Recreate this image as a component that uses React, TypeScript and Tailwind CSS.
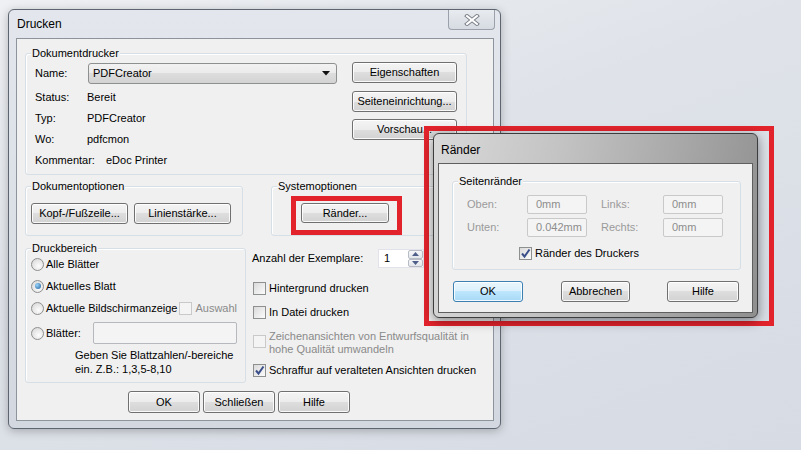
import React from "react";

type Kids = { children?: React.ReactNode; className?: string };

function Btn({ children, className = "", focus = false }: Kids & { focus?: boolean }) {
  return (
    <div
      className={`flex items-center justify-center rounded-[3px] border whitespace-nowrap shadow-[inset_0_0_0_1px_rgba(255,255,255,0.85)] ${
        focus
          ? "border-[#3c7fb1] bg-[linear-gradient(180deg,#eaf6fd,#d9f0fc_50%,#bee6fd_50%,#a7d9f5)]"
          : "border-[#707070] bg-[linear-gradient(180deg,#f4f4f4,#ececec_50%,#dedede_50%,#d2d2d2)]"
      } ${className}`}
    >
      {children}
    </div>
  );
}

function Tick() {
  return (
    <svg width="11" height="11" viewBox="0 0 11 11">
      <path d="M2 5.5 L4.5 8.5 L9.5 1.5" fill="none" stroke="#3a4f8a" strokeWidth="2" />
    </svg>
  );
}

function Check({ checked = false, disabled = false }: { checked?: boolean; disabled?: boolean }) {
  return (
    <div
      className={`flex h-[13px] w-[13px] shrink-0 items-center justify-center border ${
        disabled ? "border-[#c9c9c9] bg-[#f4f4f4]" : "border-[#8e8f8f] bg-[linear-gradient(135deg,#dadada,#fbfbfb)]"
      }`}
    >
      {checked && <Tick />}
    </div>
  );
}

function Radio({ on = false }: { on?: boolean }) {
  return (
    <div className="flex h-[13px] w-[13px] shrink-0 items-center justify-center rounded-full border border-[#8e8f8f] bg-[radial-gradient(circle_at_60%_65%,#fdfdfd,#d3d3d3)]">
      {on && <div className="h-[6px] w-[6px] rounded-full bg-[radial-gradient(circle_at_35%_35%,#9bd6fa,#1d5d9c)]" />}
    </div>
  );
}

function Group({ label, className = "", children }: Kids & { label: string }) {
  return (
    <div className={`relative rounded-[3px] border border-[#d5dfe5] shadow-[inset_1px_1px_0_#ffffff] ${className}`}>
      <span className="absolute -top-[8px] left-[5px] bg-[#f0f0f0] px-[1px] leading-[14px]">{label}</span>
      {children}
    </div>
  );
}

function Field({ label, value }: { label: string; value: string }) {
  return (
    <div className="flex h-[21px] items-center">
      <span className="w-[52px] shrink-0">{label}</span>
      <span>{value}</span>
    </div>
  );
}

function GrayInput({ value, className = "" }: { value: string; className?: string }) {
  return (
    <div className={`flex h-[19px] items-center rounded-[2px] border border-[#c9c9c9] bg-[#f4f4f4] pl-[8px] text-[#8d8d8d] ${className}`}>
      {value}
    </div>
  );
}

export default function App() {
  return (
    <div className="relative h-[450px] w-[801px] overflow-hidden bg-[linear-gradient(160deg,#eef0f3_0%,#dfe3e9_40%,#d6dbe4_100%)] font-['Liberation_Sans',Arial,sans-serif] text-[11px] text-black">
      {/* Drucken window */}
      <div className="absolute left-[8px] top-[9px] flex h-[420px] w-[493px] flex-col rounded-[6px] border border-[#5d6570] bg-[linear-gradient(180deg,#e3e7ed,#d3d8e0)] shadow-[0_2px_10px_rgba(0,0,0,0.25)]">
        <div className="flex h-[28px] items-center pl-[8px] text-[12px]">Drucken</div>
        <div className="absolute right-[5px] top-0 flex h-[20px] w-[47px] items-center justify-center rounded-b-[4px] border border-t-0 border-[#9aa1aa] bg-[linear-gradient(180deg,#e8ebef,#d6dbe2)]">
          <svg width="16" height="12" viewBox="0 0 16 12">
            <path d="M3 2 L13 10 M13 2 L3 10" stroke="#7b8088" strokeWidth="4" strokeLinecap="square" />
            <path d="M3 2 L13 10 M13 2 L3 10" stroke="#ffffff" strokeWidth="2" strokeLinecap="square" />
          </svg>
        </div>

        <div className="ml-[7px] flex h-[383px] w-[478px] flex-col border border-[#8d949c] bg-[#f0f0f0]">
          {/* Dokumentdrucker */}
          <Group label="Dokumentdrucker" className="ml-[8px] mt-[14px] h-[122px] w-[442px] shrink-0">
            <div className="flex pl-[9px] pt-[8px]">
              <div className="w-[302px]">
                <div className="mt-[1px] flex h-[21px] items-center">
                  <span className="w-[53px] shrink-0">Name:</span>
                  <div className="flex h-[21px] w-[250px] items-center justify-between rounded-[3px] border border-[#8e8f8f] bg-[linear-gradient(180deg,#f2f2f2,#ebebeb_50%,#dddddd_50%,#d3d3d3)] pl-[4px] pr-[6px]">
                    <span>PDFCreator</span>
                    <svg width="8" height="5" viewBox="0 0 8 5">
                      <path d="M0 0 L8 0 L4 4.5 Z" fill="#111" />
                    </svg>
                  </div>
                </div>
                <div className="mt-[3px]">
                  <Field label="Status:" value="Bereit" />
                  <Field label="Typ:" value="PDFCreator" />
                  <Field label="Wo:" value="pdfcmon" />
                  <div className="flex h-[21px] items-center">
                    <span className="w-[71px] shrink-0">Kommentar:</span>
                    <span>eDoc Printer</span>
                  </div>
                </div>
              </div>
              <div className="ml-[15px] flex w-[105px] flex-col">
                <Btn className="h-[21px]">Eigenschaften</Btn>
                <Btn className="mt-[8px] h-[21px]">Seiteneinrichtung...</Btn>
                <Btn className="mt-[7px] h-[21px]">Vorschau...</Btn>
              </div>
            </div>
          </Group>

          {/* Options */}
          <div className="mt-[11px] flex shrink-0">
            <Group label="Dokumentoptionen" className="ml-[8px] h-[50px] w-[218px]">
              <div className="flex gap-[6px] pl-[5px] pt-[16px]">
                <Btn className="h-[21px] w-[97px]">Kopf-/Fußzeile...</Btn>
                <Btn className="h-[21px] w-[97px]">Linienstärke...</Btn>
              </div>
            </Group>
            <Group label="Systemoptionen" className="ml-[28px] h-[50px] w-[196px]">
              <div className="pl-[29px] pt-[16px]">
                <Btn className="h-[20px] w-[88px]">Ränder...</Btn>
              </div>
            </Group>
          </div>

          {/* Druckbereich + right column */}
          <div className="mt-[12px] flex shrink-0">
            <Group label="Druckbereich" className="ml-[8px] h-[135px] w-[221px]">
              <div className="pl-[5px] pt-[4px]">
                <div className="flex h-[22px] items-center gap-[2px]">
                  <Radio />
                  <span>Alle Blätter</span>
                </div>
                <div className="flex h-[22px] items-center gap-[2px]">
                  <Radio on />
                  <span>Aktuelles Blatt</span>
                </div>
                <div className="flex h-[22px] items-center gap-[2px] whitespace-nowrap">
                  <Radio />
                  <span className="shrink-0">Aktuelle Bildschirmanzeige</span>
                  <div className="ml-auto mr-[9px] flex shrink-0 items-center gap-[3px] text-[#8a8a8a]">
                    <Check disabled />
                    <span>Auswahl</span>
                  </div>
                </div>
                <div className="mt-[3px] flex h-[22px] items-center">
                  <Radio />
                  <span className="ml-[2px] w-[47px]">Blätter:</span>
                  <div className="h-[22px] w-[144px] rounded-[2px] border border-[#b5b8bd] bg-[#f4f4f4]" />
                </div>
                <div className="mt-[4px] pl-[44px] leading-[14px]">
                  <div>Geben Sie Blattzahlen/-bereiche</div>
                  <div>ein. Z.B.: 1,3,5-8,10</div>
                </div>
              </div>
            </Group>

            <div className="ml-[6px] flex w-[222px] flex-col">
              <div className="mt-[1px] flex h-[19px] w-[172px] items-center justify-between">
                <span>Anzahl der Exemplare:</span>
                <div className="flex h-[19px] w-[46px] border border-[#e2e3ea] bg-white">
                  <span className="flex flex-1 items-center pl-[5px]">1</span>
                  <div className="flex w-[15px] flex-col">
                    <div className="flex flex-1 items-center justify-center rounded-[2px] border border-[#b8bcc4] bg-[linear-gradient(180deg,#f5f6f8,#e3e6ea)]">
                      <svg width="7" height="4" viewBox="0 0 7 4"><path d="M0 4 L7 4 L3.5 0 Z" fill="#4d5f88" /></svg>
                    </div>
                    <div className="flex flex-1 items-center justify-center rounded-[2px] border border-[#b8bcc4] bg-[linear-gradient(180deg,#f5f6f8,#e3e6ea)]">
                      <svg width="7" height="4" viewBox="0 0 7 4"><path d="M0 0 L7 0 L3.5 4 Z" fill="#4d5f88" /></svg>
                    </div>
                  </div>
                </div>
              </div>
              <div className="mt-[10px] flex h-[20px] items-center gap-[3px] pl-[1px]">
                <Check />
                <span>Hintergrund drucken</span>
              </div>
              <div className="mt-[4px] flex h-[20px] items-center gap-[3px] pl-[1px]">
                <Check />
                <span>In Datei drucken</span>
              </div>
              <div className="mt-[8px] flex gap-[3px] pl-[1px] text-[#8a8a8a]">
                <div className="mt-[5px]">
                  <Check disabled />
                </div>
                <div className="leading-[13px]">
                  <div>Zeichenansichten von Entwurfsqualität in</div>
                  <div>hohe Qualität umwandeln</div>
                </div>
              </div>
              <div className="mt-[4px] flex h-[20px] items-center gap-[3px] pl-[1px]">
                <Check checked />
                <span className="whitespace-nowrap">Schraffur auf veralteten Ansichten drucken</span>
              </div>
            </div>
          </div>

          {/* Bottom buttons */}
          <div className="ml-[111px] mt-[8px] flex gap-[3px]">
            <Btn className="h-[22px] w-[72px]">OK</Btn>
            <Btn className="h-[22px] w-[72px]">Schließen</Btn>
            <Btn className="h-[22px] w-[72px]">Hilfe</Btn>
          </div>
        </div>
      </div>

      {/* highlight around Ränder button */}
      <div className="absolute left-[291px] top-[196px] h-[39px] w-[111px] border-[5px] border-[#e3232c]" />

      {/* Ränder dialog */}
      <div className="absolute left-[424px] top-[126px] h-[200px] w-[350px] border-[5px] border-[#e3232c]" />
      <div className="absolute left-[433px] top-[133px] flex h-[185px] w-[325px] flex-col rounded-[6px] border border-[#3d3d3d] bg-[linear-gradient(100deg,#d9d9d9_0%,#c4c4c4_35%,#a8a8a8_70%,#8f8f8f_100%)] shadow-[0_3px_12px_rgba(0,0,0,0.45)]">
        <div className="flex h-[29px] items-center pl-[7px] pt-[2px] text-[12px]">Ränder</div>
        <div className="ml-[4px] flex h-[150px] w-[315px] flex-col border border-[#5f5f5f] bg-[#f0f0f0]">
          <Group label="Seitenränder" className="ml-[13px] mt-[17px] h-[89px] w-[289px] shrink-0">
            <div className="pl-[14px] pt-[13px] text-[#9a9a9a]">
              <div className="flex items-center">
                <span className="w-[60px]">Oben:</span>
                <GrayInput value="0mm" className="w-[60px]" />
                <span className="ml-[14px] w-[62px]">Links:</span>
                <GrayInput value="0mm" className="w-[60px]" />
              </div>
              <div className="mt-[4px] flex items-center">
                <span className="w-[60px]">Unten:</span>
                <GrayInput value="0.042mm" className="w-[60px]" />
                <span className="ml-[14px] w-[62px]">Rechts:</span>
                <GrayInput value="0mm" className="w-[60px]" />
              </div>
              <div className="ml-[52px] mt-[8px] flex h-[16px] items-center gap-[3px] text-black">
                <Check checked />
                <span>Ränder des Druckers</span>
              </div>
            </div>
          </Group>
          <div className="ml-[14px] mt-[11px] flex">
            <Btn focus className="h-[21px] w-[70px]">OK</Btn>
            <Btn className="ml-[38px] h-[21px] w-[69px]">Abbrechen</Btn>
            <Btn className="ml-[37px] h-[21px] w-[72px]">Hilfe</Btn>
          </div>
        </div>
      </div>
    </div>
  );
}
